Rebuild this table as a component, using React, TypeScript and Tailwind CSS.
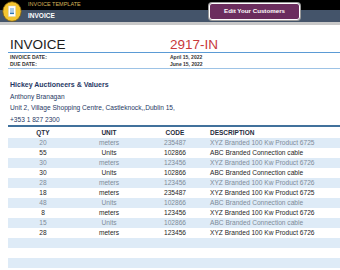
import React from "react";

const rows: [string, string, string, string][] = [
  ["20", "meters", "235487", "XYZ Branded 100 Kw Product 6725"],
  ["55", "Units", "102866", "ABC Branded Connection cable"],
  ["30", "meters", "123456", "XYZ Branded 100 Kw Product 6726"],
  ["30", "Units", "102866", "ABC Branded Connection cable"],
  ["28", "meters", "123456", "XYZ Branded 100 Kw Product 6726"],
  ["18", "meters", "235487", "XYZ Branded 100 Kw Product 6725"],
  ["48", "Units", "102866", "ABC Branded Connection cable"],
  ["8", "meters", "123456", "XYZ Branded 100 Kw Product 6726"],
  ["15", "Units", "102866", "ABC Branded Connection cable"],
  ["28", "meters", "123456", "XYZ Branded 100 Kw Product 6726"],
  ["", "", "", ""],
  ["", "", "", ""],
  ["", "", "", ""],
  ["", "", "", ""],
];

function Icon() {
  return (
    <svg width="20" height="21" viewBox="0 0 20 21">
      <ellipse cx="10" cy="10.5" rx="9.2" ry="9.8" fill="#f4c430" stroke="#7a5a10" strokeWidth="0.8" />
      <rect x="6.5" y="5" width="7" height="10.5" fill="#ffffff" stroke="#d0d0d0" strokeWidth="0.4" />
      <rect x="8" y="7.5" width="4" height="1" fill="#5b9bd5" />
      <rect x="8" y="9.5" width="4" height="1" fill="#5b9bd5" />
      <rect x="8" y="11.5" width="4" height="1.6" fill="#2e75b6" />
    </svg>
  );
}

export default function App() {
  return (
    <div
      className="w-[340px] h-[270px] overflow-hidden bg-white relative"
      style={{ fontFamily: "'Liberation Sans', Arial, sans-serif" }}
    >
      {/* Header */}
      <div className="relative h-[22px]">
        <div className="h-[10px] bg-black flex items-center pl-[28px]">
          <span className="text-[5.5px] leading-none text-[#d6b35a]">INVOICE TEMPLATE</span>
        </div>
        <div className="h-[12px] bg-[#44546a] flex items-center pl-[28px]">
          <span className="text-[6.5px] leading-none font-bold text-white">INVOICE</span>
        </div>
        <div className="absolute left-[2px] top-[1px]">
          <Icon />
        </div>
        <div className="absolute left-[209px] top-[3px] w-[91px] h-[17px] rounded-[3px] bg-[#6b2d5e] border border-white ring-1 ring-[#9a9a9a] flex items-center justify-center">
          <span className="text-[6.2px] leading-none font-bold text-white">Edit Your Customers</span>
        </div>
      </div>
      <div className="h-[3px] bg-[#c8c8c8]" />

      {/* Title row */}
      <div className="mt-[13px] pl-[10px] flex items-end">
        <div className="w-[160px] text-[13.5px] leading-[14px] text-[#1b1b1b]">INVOICE</div>
        <div className="text-[13.5px] leading-[14px] text-[#c8383c]">2917-IN</div>
      </div>
      <div className="ml-[8px] h-[1px] bg-[#5b9bd5]" />
      <div className="pl-[10px] pt-[1px] text-[5px] leading-[7px] font-bold text-[#333]">
        <div className="flex">
          <div className="w-[160px]">INVOICE DATE:</div>
          <div>April 15, 2022</div>
        </div>
        <div className="flex">
          <div className="w-[160px]">DUE DATE:</div>
          <div>June 15, 2022</div>
        </div>
      </div>
      <div className="ml-[8px] h-[1px] bg-[#9dc3e6]" />

      {/* Customer */}
      <div className="pl-[10px] mt-[10px] text-[6.6px] leading-[11.5px] text-[#1f3864]">
        <div className="font-bold text-[7px]">Hickey Auctioneers &amp; Valuers</div>
        <div>Anthony Branagan</div>
        <div>Unit 2, Village Shopping Centre, Castleknock,,Dublin 15,</div>
        <div>+353 1 827 2300</div>
      </div>

      {/* Table */}
      <div className="ml-[8px] border-t-2 border-[#41719c]">
        <div className="h-[11px] flex items-end pb-[1px] text-[6.5px] leading-[8px] font-bold text-[#1f2d3d]">
          <div className="w-[70px] text-center">QTY</div>
          <div className="w-[62px] text-center">UNIT</div>
          <div className="w-[70px] text-center">CODE</div>
          <div>DESCRIPTION</div>
        </div>
        {rows.map((r, i) => {
          const blue = i % 2 === 0;
          return (
            <div
              key={i}
              className={
                "h-[10px] flex items-center text-[6.6px] leading-[10px] " +
                (blue ? "bg-[#deebf7] text-[#7f8b99]" : "bg-white text-[#262626]")
              }
            >
              <div className="w-[70px] text-center">{r[0]}</div>
              <div className="w-[62px] text-center">{r[1]}</div>
              <div className="w-[70px] text-center">{r[2]}</div>
              <div>{r[3]}</div>
            </div>
          );
        })}
      </div>
    </div>
  );
}
